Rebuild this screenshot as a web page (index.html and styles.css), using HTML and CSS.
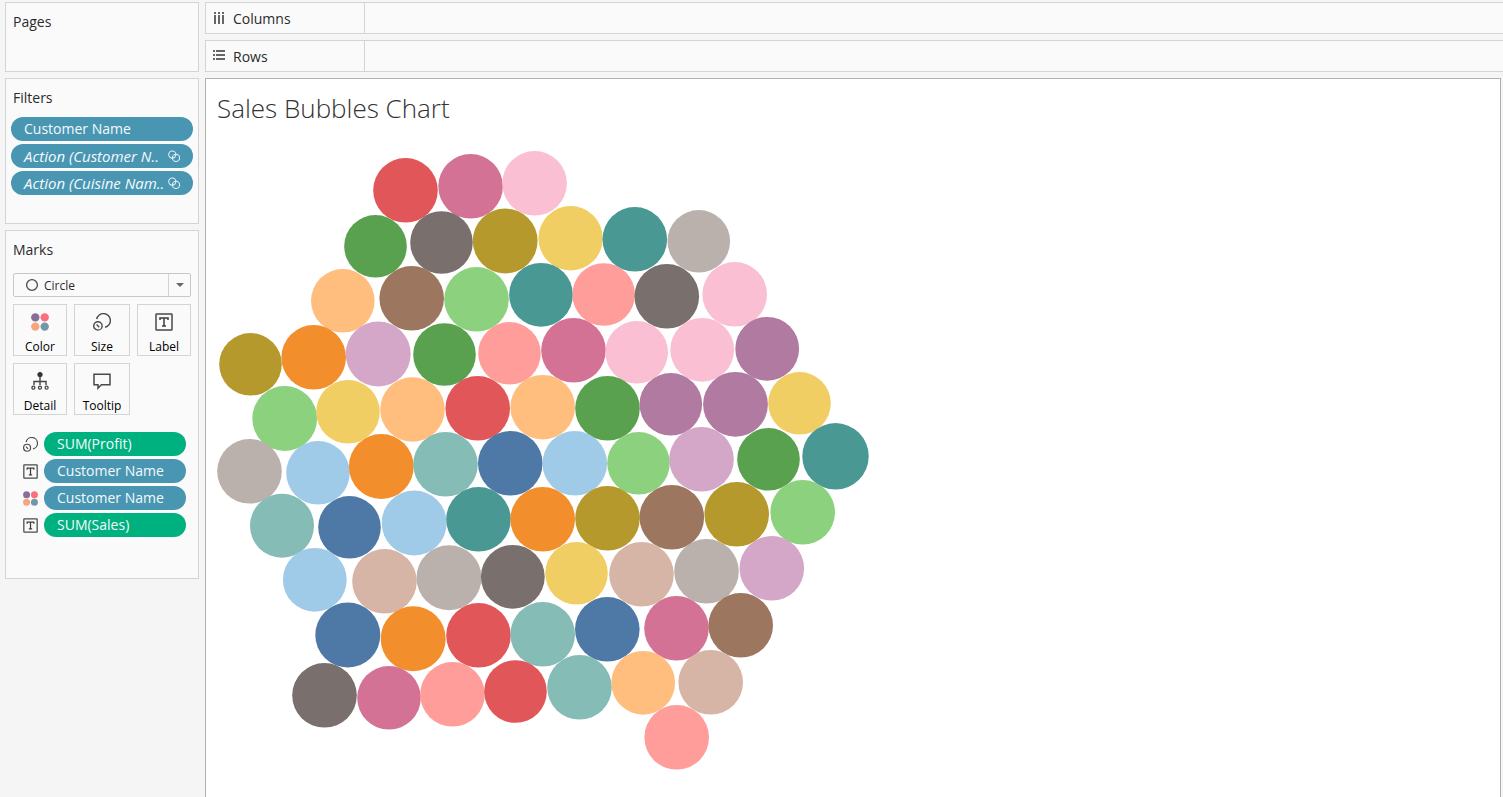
FILE: index.html
```html
<!DOCTYPE html>
<html lang="en">
<head>
<meta charset="utf-8">
<title>Sales Bubbles Chart</title>
<link rel="stylesheet" href="styles.css">
</head>
<body>
<svg class="defs" aria-hidden="true">
  <symbol id="i-color" viewBox="0 0 18 18">
    <circle cx="4.3" cy="4.4" r="4.2" fill="#85709a"/><circle cx="13.7" cy="4.4" r="4.2" fill="#fb6f80"/>
    <circle cx="4.3" cy="13.6" r="4.2" fill="#f5a67b"/><circle cx="13.7" cy="13.6" r="4.2" fill="#6f9aa5"/>
  </symbol>
  <symbol id="i-size" viewBox="0 0 18 18">
    <g fill="none" stroke="#4a4a4a" stroke-width="1.4">
      <path d="M3.7 6.2A6.9 6.9 0 1 1 12 14.2"/>
      <circle cx="4.9" cy="12.9" r="4.2"/><path d="M3.6 11.6l2.6 2.6"/>
    </g>
  </symbol>
  <symbol id="i-label" viewBox="0 0 18 18">
    <rect x="1" y="1" width="16" height="16" rx="0.6" fill="none" stroke="#4a4a4a" stroke-width="1.5"/>
    <path d="M5 7V5h8v2M9 5v8M7 13h4" fill="none" stroke="#3c3c3c" stroke-width="1.5"/>
  </symbol>
  <symbol id="i-detail" viewBox="0 0 18 18">
    <circle cx="9" cy="2.6" r="2.6" fill="#333"/>
    <path d="M9 4v9M3 13V9.5h12V13" fill="none" stroke="#444" stroke-width="1.4"/>
    <g fill="none" stroke="#444" stroke-width="1.3"><circle cx="2.4" cy="15.7" r="1.5"/><circle cx="9" cy="15.7" r="1.5"/><circle cx="15.6" cy="15.7" r="1.5"/></g>
  </symbol>
  <symbol id="i-tip" viewBox="0 0 18 18">
    <path d="M1 2.2h16v10.6H8.4L5 16.2v-3.4H1z" fill="none" stroke="#4a4a4a" stroke-width="1.5"/>
  </symbol>
  <symbol id="i-link" viewBox="0 0 12 12">
    <g fill="none" stroke="#e4f0f5" stroke-width="1.1"><circle cx="4.3" cy="4.6" r="3.6"/><circle cx="8" cy="7.9" r="3.6"/></g>
  </symbol>
</svg>

<div class="workspace">
  <aside class="sidebar">
    <section class="card pages">
      <h2 class="heading">Pages</h2>
    </section>

    <section class="card filters">
      <h2 class="heading">Filters</h2>
      <ul class="pills">
        <li><button class="pill" type="button">Customer Name</button></li>
        <li><button class="pill action" type="button">Action (Customer N..<svg class="link"><use href="#i-link"/></svg></button></li>
        <li><button class="pill action" type="button">Action (Cuisine Nam..<svg class="link"><use href="#i-link"/></svg></button></li>
      </ul>
    </section>

    <section class="card marks">
      <h2 class="heading">Marks</h2>
      <div class="mark-type">
        <select class="mark-select" aria-label="Mark type"><option>Circle</option></select>
        <svg class="ring" viewBox="0 0 14 14"><circle cx="7" cy="7" r="5.4" fill="none" stroke="#4a4a4a" stroke-width="1.3"/></svg>
        <span class="arrow"><svg class="caret" viewBox="0 0 8 4"><path d="M0 0h8L4 4z" fill="#666"/></svg></span>
      </div>
      <div class="shelves">
        <button class="shelf" type="button"><svg class="icon"><use href="#i-color"/></svg>Color</button>
        <button class="shelf" type="button"><svg class="icon"><use href="#i-size"/></svg>Size</button>
        <button class="shelf" type="button"><svg class="icon"><use href="#i-label"/></svg>Label</button>
        <button class="shelf" type="button"><svg class="icon"><use href="#i-detail"/></svg>Detail</button>
        <button class="shelf" type="button"><svg class="icon"><use href="#i-tip"/></svg>Tooltip</button>
      </div>
      <ul class="encodings">
        <li class="encoding"><svg class="mini"><use href="#i-size"/></svg><button class="pill measure" type="button">SUM(Profit)</button></li>
        <li class="encoding"><svg class="mini"><use href="#i-label"/></svg><button class="pill" type="button">Customer Name</button></li>
        <li class="encoding"><svg class="mini"><use href="#i-color"/></svg><button class="pill" type="button">Customer Name</button></li>
        <li class="encoding"><svg class="mini"><use href="#i-label"/></svg><button class="pill measure" type="button">SUM(Sales)</button></li>
      </ul>
    </section>
  </aside>

  <main class="main">
    <div class="axis">
      <div class="axis-name"><svg class="axis-icon" viewBox="0 0 12 12" fill="#666"><path d="M1 0h2v2H1zM5 0h2v2H5zM9 0h2v2H9zM1 3h2v9H1zM5 3h2v9H5zM9 3h2v9H9z"/></svg>Columns</div>
    </div>
    <div class="axis">
      <div class="axis-name"><svg class="axis-icon" viewBox="0 0 12 12" fill="#666"><path d="M0 0h2v2H0zM0 4h2v2H0zM0 8h2v2H0zM3 0h9v2H3zM3 4h9v2H3zM3 8h9v2H3z"/></svg>Rows</div>
    </div>
    <section class="view">
      <h1 class="title">Sales Bubbles Chart</h1>
      <svg class="bubbles" id="bubbles" viewBox="206 139 674 640" role="img" aria-label="Sales by customer"></svg>
    </section>
  </main>
</div>
<script src="chart.js"></script>
</body>
</html>
```
FILE: styles.css
```css
* { box-sizing: border-box; }
body {
  margin: 0;
  background: #f5f5f5;
  color: #2b2b2b;
  font-family: "Open Sans", "Noto Sans", sans-serif;
  font-size: 14px;
  overflow: hidden;
}
button, select { font: inherit; color: inherit; }
ul { list-style: none; margin: 0; padding: 0; }
.defs { display: none; }

.workspace {
  display: flex;
  gap: 6px;
  min-height: 100vh;
  padding: 2px 0 0 5px;
}
.sidebar {
  flex: none;
  width: 194px;
  display: flex;
  flex-direction: column;
  gap: 6px;
}
.card {
  background: #fafafa;
  border: 1px solid #d4d4d4;
  padding: 9px 5px 0;
}
.pages { padding-bottom: 39px; }
.filters { padding-bottom: 28px; }
.marks { padding: 9px 7px 41px; }
.heading {
  margin: 0;
  font-size: 14px;
  font-weight: 400;
  line-height: 20px;
}
.pages .heading, .filters .heading { padding-left: 2px; }

.pills { display: grid; gap: 3px; margin-top: 9px; }
.pill {
  display: flex;
  align-items: center;
  justify-content: space-between;
  width: 100%;
  height: 24px;
  padding: 0 13px;
  border: 0;
  border-radius: 12px;
  background: #4996b2;
  color: #f4fafc;
  font-size: 14px;
  line-height: 24px;
  white-space: nowrap;
}
.measure { background: #00b180; }
.action { font-size: 15px; font-style: italic; }
.link { width: 12px; height: 12px; flex: none; }

.mark-type { position: relative; margin-top: 13px; }
.mark-select {
  display: block;
  width: 100%;
  height: 24px;
  padding: 1px 24px 0 30px;
  appearance: none;
  background: #fafafa;
  border: 1px solid #c8c8c8;
  border-radius: 2px;
  font-size: 12px;
}
.ring { position: absolute; left: 12px; top: 5px; width: 14px; height: 14px; pointer-events: none; }
.arrow {
  position: absolute;
  right: 1px;
  top: 1px;
  bottom: 1px;
  width: 22px;
  display: grid;
  place-items: center;
  border-left: 1px solid #d4d4d4;
  pointer-events: none;
}
.caret { width: 8px; height: 4px; }

.shelves {
  display: grid;
  grid-template-columns: 27fr 28fr 27fr;
  gap: 7px;
  margin-top: 7px;
}
.shelf {
  display: flex;
  flex-direction: column;
  align-items: center;
  justify-content: space-between;
  height: 52px;
  padding: 8px 0 0;
  background: #fafafa;
  border: 1px solid #d4d4d4;
  color: #000;
  font-size: 12px;
  line-height: 16px;
}
.icon { width: 18px; height: 18px; }
.encodings { display: grid; gap: 3px; margin: 17px 5px 0 10px; }
.encoding { display: flex; align-items: center; gap: 6px; }
.mini { width: 15px; height: 15px; flex: none; }

.main {
  flex: 1;
  min-width: 0;
  display: flex;
  flex-direction: column;
  gap: 6px;
}
.axis {
  display: flex;
  height: 32px;
  background: #fafafa;
  border: 1px solid #d4d4d4;
  border-right: 0;
}
.axis-name {
  display: flex;
  align-items: center;
  gap: 8px;
  width: 159px;
  padding-left: 7px;
  border-right: 1px solid #d4d4d4;
}
.axis-icon { width: 12px; height: 12px; }
.view {
  flex: 1;
  margin-right: 2px;
  padding: 13px 0 0;
  background: #fff;
  border: 1px solid #b0b0b0;
  border-bottom: 0;
}
.title {
  margin: 0;
  padding-left: 11px;
  font-size: 26px;
  font-weight: 300;
  line-height: 32px;
  color: #333;
}
.bubbles { display: block; width: 674px; max-width: 100%; margin-top: 15px; }
```
FILE: chart.js
```js
const palette = {
  blue: '#4e79a7', sky: '#a0cbe8', orange: '#f28e2b', peach: '#ffbe7d',
  green: '#59a14f', lime: '#8cd17d', olive: '#b6992d', yellow: '#f1ce63',
  teal: '#499894', aqua: '#86bcb6', red: '#e15759', salmon: '#ff9d9a',
  gray: '#79706e', silver: '#bab0ac', rose: '#d37295', pink: '#fabfd2',
  purple: '#b07aa1', lilac: '#d4a6c8', brown: '#9d7660', tan: '#d7b5a6'
};

// x, y, radius, colour
const marks = [
  [405.5, 190.3, 32.3, 'red'], [470.6, 186.3, 32.3, 'rose'], [534.6, 183.3, 32.3, 'pink'],
  [375.5, 246.3, 31.3, 'green'], [441.5, 242.5, 31.3, 'gray'], [505.2, 241, 32.4, 'olive'],
  [570.6, 238.3, 32.2, 'yellow'], [634.8, 239.3, 32.3, 'teal'], [698.8, 241.3, 31.3, 'silver'],
  [342.8, 300.8, 31.8, 'peach'], [411.7, 298.3, 32.3, 'brown'], [476.5, 299.3, 32.3, 'lime'],
  [541, 294.8, 31.9, 'teal'], [603.7, 294.5, 31.3, 'salmon'], [666.8, 296.3, 32.3, 'gray'],
  [734.7, 294.3, 32.3, 'pink'],
  [250.5, 364.3, 31.3, 'olive'], [313.7, 357.3, 32.3, 'orange'], [378.2, 354, 32.5, 'lilac'],
  [444.5, 354.5, 31.3, 'green'], [509.5, 353.3, 31.3, 'salmon'], [573.5, 350.3, 32.3, 'rose'],
  [636.7, 352.3, 31.3, 'pink'], [702.2, 349.8, 31.9, 'pink'], [767.2, 348.8, 31.9, 'purple'],
  [284.7, 418.5, 32.4, 'lime'], [348, 411.8, 31.8, 'yellow'], [412.5, 409.5, 32.3, 'peach'],
  [477.7, 408.3, 32.3, 'red'], [542.7, 407.2, 32.3, 'peach'], [607.5, 408.3, 32.3, 'green'],
  [670.8, 404.3, 31.3, 'purple'], [735.5, 404.3, 32.4, 'purple'], [799.5, 403.3, 31.3, 'yellow'],
  [249.5, 471.3, 32.3, 'silver'], [318, 472.8, 31.8, 'sky'], [381.3, 466.5, 32.4, 'orange'],
  [445.5, 464.3, 32.3, 'aqua'], [510.3, 463.3, 32.3, 'blue'], [574.8, 463.3, 32.3, 'sky'],
  [638.5, 463.3, 31.3, 'lime'], [701.5, 459.3, 32.3, 'lilac'], [768.5, 459.3, 31.3, 'green'],
  [835.5, 456.3, 33.2, 'teal'],
  [282, 525.8, 32, 'aqua'], [349.5, 527.3, 31.3, 'blue'], [414.2, 523, 32.5, 'sky'],
  [478.5, 519.3, 32.3, 'teal'], [542.7, 519.3, 32.3, 'orange'], [607.5, 518.3, 32.3, 'olive'],
  [671.8, 517.3, 32.3, 'brown'], [736.7, 514.3, 32.3, 'olive'], [802.7, 512.3, 32.3, 'lime'],
  [314.8, 579.8, 31.9, 'sky'], [384.5, 581.3, 32.3, 'tan'], [449, 577.7, 32.5, 'silver'],
  [512.8, 576.8, 31.9, 'gray'], [576.5, 573.3, 31.3, 'yellow'], [641.5, 574.3, 32.3, 'tan'],
  [706.5, 571.3, 32.3, 'silver'], [771.8, 568.3, 32.3, 'lilac'],
  [347.8, 635, 32.5, 'blue'], [413.2, 638.7, 32.5, 'orange'], [478.5, 635.3, 32.3, 'red'],
  [542.7, 634.3, 32.3, 'aqua'], [607.3, 629.3, 32.3, 'blue'], [676.5, 628.3, 32.3, 'rose'],
  [740.7, 625.3, 32.3, 'brown'],
  [324.5, 695.3, 32.3, 'gray'], [389, 697.8, 31.8, 'rose'], [452.5, 694.3, 32.3, 'salmon'],
  [515.5, 691.5, 31.3, 'red'], [579.5, 687.3, 32.3, 'aqua'], [643.2, 682.8, 31.9, 'peach'],
  [710.7, 682.3, 32.3, 'tan'], [676.7, 737.3, 32.3, 'salmon']
];

const svg = document.getElementById('bubbles');
for (const [cx, cy, r, colour] of marks) {
  const circle = document.createElementNS('http://www.w3.org/2000/svg', 'circle');
  circle.setAttribute('cx', cx);
  circle.setAttribute('cy', cy);
  circle.setAttribute('r', r);
  circle.setAttribute('fill', palette[colour]);
  svg.appendChild(circle);
}
```
